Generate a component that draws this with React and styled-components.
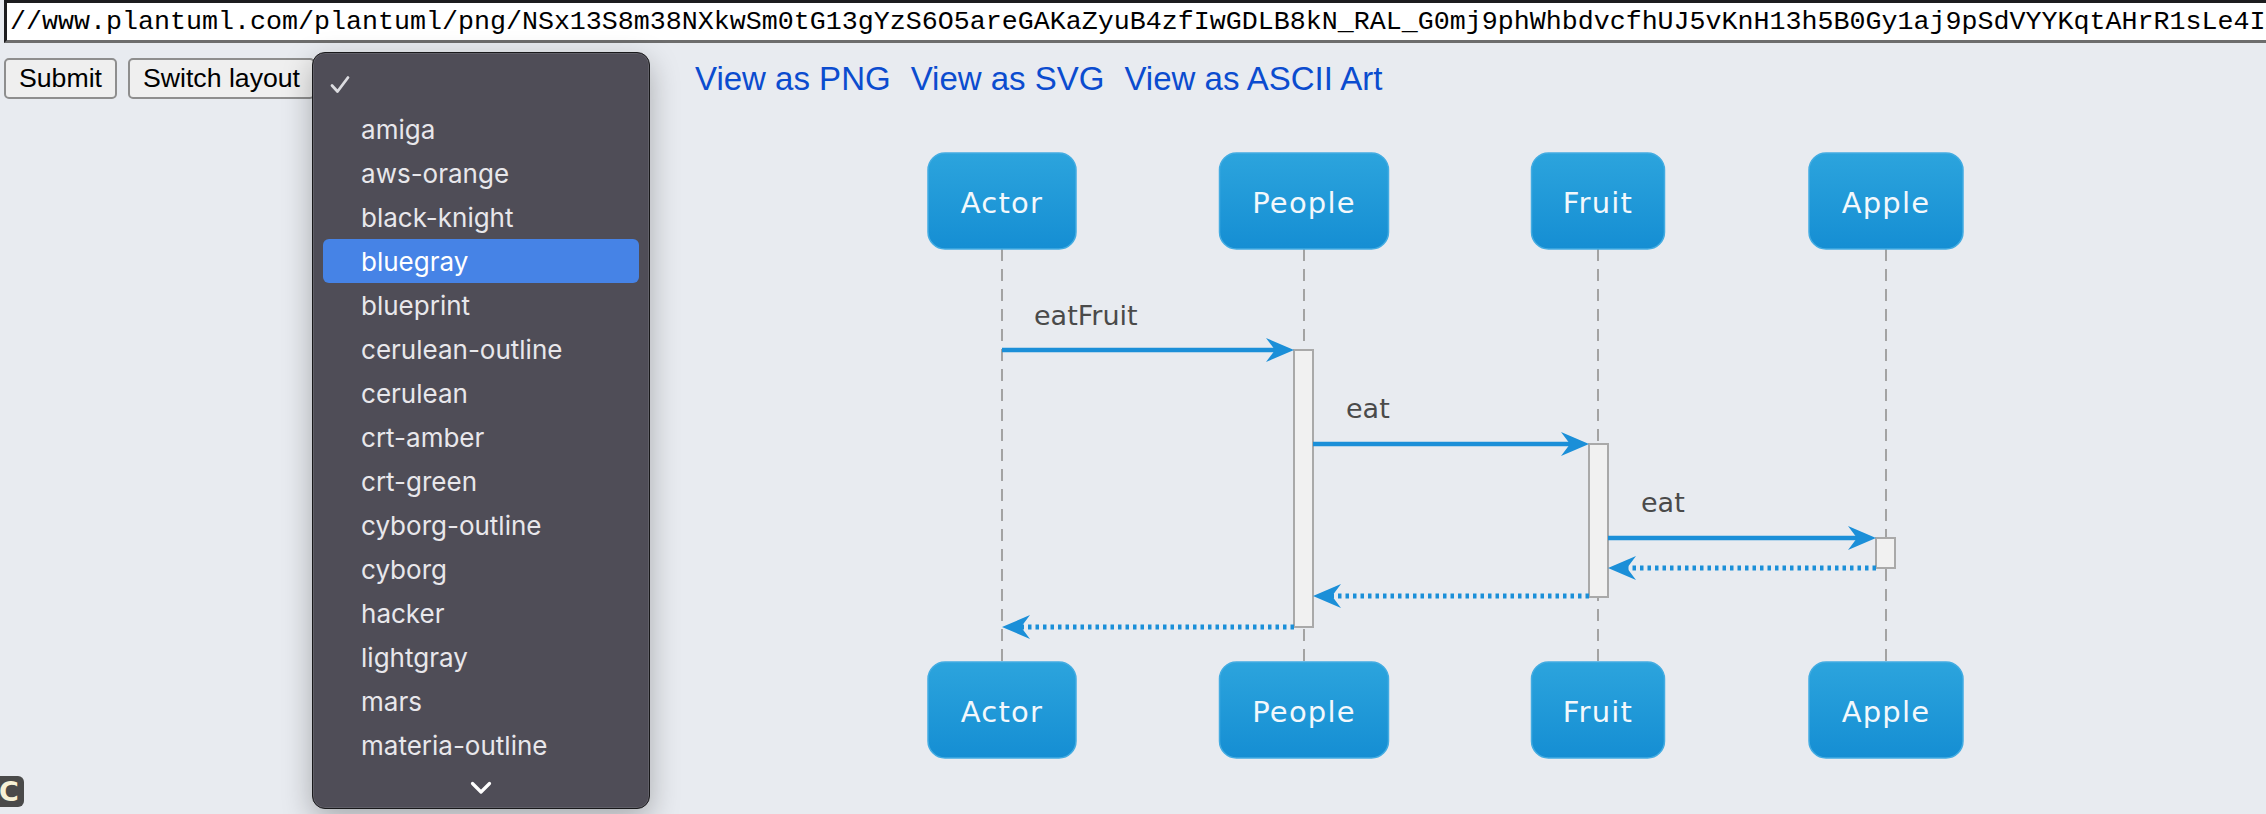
import React from 'react';
import styled, { createGlobalStyle } from 'styled-components';

const GlobalStyle = createGlobalStyle`
  html, body {
    margin: 0;
    padding: 0;
    overflow: hidden;
    background: #e8ebf0;
  }
`;

const Page = styled.div`
  position: relative;
  width: 2266px;
  height: 814px;
  overflow: hidden;
  background: #e8ebf0;
`;

const UrlInput = styled.input`
  display: block;
  box-sizing: border-box;
  width: 2320px;
  height: 43px;
  margin: 0 0 0 4px;
  padding: 0 0 0 3px;
  border: none;
  border-top: 3px solid #1d1d1f;
  border-left: 3px solid #1d1d1f;
  border-bottom: 3px solid #6d6d6d;
  background: #fff;
  color: #000;
  font-family: "Liberation Mono", "Courier New", monospace;
  font-size: 26.67px;
  outline: none;
`;

const Main = styled.div`
  display: flex;
  align-items: flex-start;
`;

const Controls = styled.div`
  box-sizing: border-box;
  flex: none;
  width: 695px;
  padding: 15px 0 0 4px;
  display: flex;
  align-items: flex-start;
  gap: 11px;
`;

const Button = styled.button`
  height: 41px;
  padding: 0 13px;
  border: 2px solid #8e8e8e;
  border-radius: 5px;
  background: #efefef;
  color: #000;
  font-family: "Liberation Sans", Arial, sans-serif;
  font-size: 26.67px;
  white-space: nowrap;
`;

const ThemeAnchor = styled.div`
  position: relative;
  width: 0;
  height: 41px;
`;

const Menu = styled.div`
  position: absolute;
  left: -14px;
  top: -6px;
  z-index: 10;
  box-sizing: border-box;
  width: 338px;
  height: 757px;
  padding: 10px 10px 0;
  display: flex;
  flex-direction: column;
  background: #4f4d57;
  border: 1px solid #19191b;
  border-radius: 13px;
  box-shadow: inset 0 0 0 1px rgba(255, 255, 255, 0.1), 0 10px 30px rgba(0, 0, 0, 0.28);
  font-family: Inter, "Noto Sans", sans-serif;
`;

const MenuItem = styled.div`
  display: grid;
  grid-template-columns: 38px 1fr;
  align-items: center;
  height: 44px;
  flex: none;
  border-radius: 6px;
  background: ${(p) => (p.$active ? '#4683e6' : 'transparent')};
  color: ${(p) => (p.$active ? '#ffffff' : '#e8e7eb')};
  font-size: 26px;
  white-space: nowrap;
`;

const Check = styled.svg`
  margin-left: 7px;
  width: 20px;
  height: 20px;
`;

const MoreRow = styled.div`
  flex: 1;
  display: flex;
  align-items: center;
  justify-content: center;
`;

const Viewer = styled.div`
  flex: 1;
  display: flex;
  flex-direction: column;
`;

const Links = styled.nav`
  display: flex;
  gap: 20px;
  padding-top: 15px;
  height: 41px;
  line-height: 41px;
`;

const Link = styled.a`
  color: #0b4ccf;
  font-family: "Liberation Sans", Arial, sans-serif;
  font-size: 33px;
  text-decoration: none;
  white-space: nowrap;
`;

const Diagram = styled.svg`
  display: block;
  align-self: center;
  width: 1200px;
  height: 700px;
`;

const Badge = styled.div`
  position: absolute;
  left: -6px;
  top: 776px;
  width: 30px;
  height: 31px;
  border-radius: 6px;
  background: #4a4a4a;
  color: #f6f1d6;
  display: flex;
  align-items: center;
  justify-content: center;
  font-family: "DejaVu Sans", sans-serif;
  font-weight: bold;
  font-size: 27px;
`;

const url =
  '//www.plantuml.com/plantuml/png/NSx13S8m38NXkwSm0tG13gYzS6O5areGAKaZyuB4zfIwGDLB8kN_RAL_G0mj9phWhbdvcfhUJ5vKnH13h5B0Gy1aj9pSdVYYKqtAHrR1sLe4IXDk_0G00';

const themes = [
  'amiga',
  'aws-orange',
  'black-knight',
  'bluegray',
  'blueprint',
  'cerulean-outline',
  'cerulean',
  'crt-amber',
  'crt-green',
  'cyborg-outline',
  'cyborg',
  'hacker',
  'lightgray',
  'mars',
  'materia-outline',
];

const participants = [
  { name: 'Actor', cx: 1001, w: 148 },
  { name: 'People', cx: 1303, w: 169 },
  { name: 'Fruit', cx: 1597, w: 133 },
  { name: 'Apple', cx: 1885, w: 154 },
];

const activations = [
  { x: 1293, y: 350, h: 277 },
  { x: 1588, y: 444, h: 153 },
  { x: 1875, y: 538, h: 30 },
];

const calls = [
  { y: 350, from: 1001, to: 1293, label: 'eatFruit', lx: 1033, ly: 325 },
  { y: 444, from: 1312, to: 1588, label: 'eat', lx: 1345, ly: 418 },
  { y: 538, from: 1607, to: 1875, label: 'eat', lx: 1640, ly: 512 },
];

const returns = [
  { y: 568, from: 1875, to: 1607 },
  { y: 596, from: 1588, to: 1312 },
  { y: 627, from: 1293, to: 1001 },
];

const ARROW = '#1b8fd8';

function head(tip, y, dir) {
  const b = tip - dir * 28;
  const n = tip - dir * 19;
  return `${tip},${y} ${b},${y - 12} ${n},${y} ${b},${y + 12}`;
}

function Participant({ name, cx, w, y }) {
  return (
    <g>
      <rect
        x={cx - w / 2}
        y={y}
        width={w}
        height={96}
        rx={17}
        fill="url(#boxFill)"
        stroke="#43ace2"
        strokeWidth={1.5}
      />
      <text
        x={cx}
        y={y + 60}
        textAnchor="middle"
        fill="#f3f8fc"
        fontFamily="DejaVu Sans, sans-serif"
        fontSize={29}
        letterSpacing={1.2}
      >
        {name}
      </text>
    </g>
  );
}

function SequenceDiagram() {
  return (
    <Diagram viewBox="880 99 1200 700">
      <defs>
        <linearGradient id="boxFill" x1="0" y1="0" x2="0" y2="1">
          <stop offset="0" stopColor="#2ca4dd" />
          <stop offset="1" stopColor="#158ed3" />
        </linearGradient>
      </defs>

      {participants.map((p) => (
        <line
          key={p.name}
          x1={p.cx}
          y1={249}
          x2={p.cx}
          y2={662}
          stroke="#a3a3a3"
          strokeWidth={2}
          strokeDasharray="12 8"
        />
      ))}

      {activations.map((a) => (
        <rect key={a.x} x={a.x} y={a.y} width={19} height={a.h} fill="#f1f1f1" stroke="#a9a9a9" strokeWidth={2} />
      ))}

      {calls.map((c) => (
        <g key={c.y}>
          <text x={c.lx} y={c.ly} fill="#4a4a4a" fontFamily="DejaVu Sans, sans-serif" fontSize={27}>
            {c.label}
          </text>
          <line x1={c.from} y1={c.y} x2={c.to - 14} y2={c.y} stroke={ARROW} strokeWidth={4.5} />
          <polygon points={head(c.to, c.y, 1)} fill={ARROW} />
        </g>
      ))}

      {returns.map((r) => (
        <g key={r.y}>
          <line
            x1={r.from}
            y1={r.y}
            x2={r.to + 14}
            y2={r.y}
            stroke={ARROW}
            strokeWidth={5}
            strokeDasharray="3.5 4"
          />
          <polygon points={head(r.to, r.y, -1)} fill={ARROW} />
        </g>
      ))}

      {participants.map((p) => (
        <Participant key={`t-${p.name}`} {...p} y={153} />
      ))}
      {participants.map((p) => (
        <Participant key={`b-${p.name}`} {...p} y={662} />
      ))}
    </Diagram>
  );
}

function ThemeMenu() {
  return (
    <Menu>
      <MenuItem>
        <Check viewBox="0 0 20 20">
          <path d="M2 10.5 L7.5 16.5 L18 2.5" fill="none" stroke="#dcdce0" strokeWidth="2.8" strokeLinecap="round" strokeLinejoin="round" />
        </Check>
        <span />
      </MenuItem>
      {themes.map((t) => (
        <MenuItem key={t} $active={t === 'bluegray'}>
          <span />
          <span>{t}</span>
        </MenuItem>
      ))}
      <MoreRow>
        <svg width="22" height="14" viewBox="0 0 22 14">
          <path d="M2.5 2.5 L11 11 L19.5 2.5" fill="none" stroke="#ffffff" strokeWidth="3.2" strokeLinecap="round" strokeLinejoin="round" />
        </svg>
      </MoreRow>
    </Menu>
  );
}

export default function App() {
  return (
    <Page>
      <GlobalStyle />
      <UrlInput defaultValue={url} spellCheck={false} />
      <Main>
        <Controls>
          <Button>Submit</Button>
          <Button>Switch layout</Button>
          <ThemeAnchor>
            <ThemeMenu />
          </ThemeAnchor>
        </Controls>
        <Viewer>
          <Links>
            <Link href="#">View as PNG</Link>
            <Link href="#">View as SVG</Link>
            <Link href="#">View as ASCII Art</Link>
          </Links>
          <SequenceDiagram />
        </Viewer>
      </Main>
      <Badge>C</Badge>
    </Page>
  );
}
